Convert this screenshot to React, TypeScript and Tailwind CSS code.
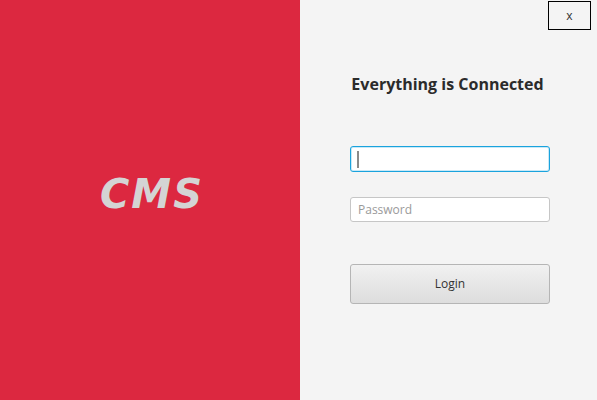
export default function App() {
  return (
    <div className="flex h-[400px] w-[597px] overflow-hidden" style={{ fontFamily: '"Open Sans", "Noto Sans", sans-serif' }}>
      {/* Brand panel */}
      <div className="flex h-full w-[300px] items-center justify-center bg-[#dc2840]">
        <span
          className="mb-[12px] pl-[4px] text-[40px] font-bold italic tracking-[2px] text-[#d4d4d4]"
          style={{ fontFamily: '"DejaVu Sans", sans-serif' }}
        >
          CMS
        </span>
      </div>

      {/* Form panel */}
      <div className="flex h-full flex-1 flex-col bg-[#f4f4f4]">
        <div className="flex justify-end pr-[6px] pt-[1px]">
          <button className="h-[29px] w-[43px] border border-black text-[12px] text-[#333]">x</button>
        </div>
        <div className="flex flex-col items-center">
          <h1 className="mt-[42px] mr-[2px] text-[16px] font-bold text-[#2b2b2b]">Everything is Connected</h1>
          <div className="ml-[3px] mt-[50px] flex w-[200px] flex-col">
            <div className="flex h-[26px] items-center rounded-[3px] border border-[#1aa3dd] bg-white px-[6px] shadow-[inset_0_0_0_1px_#c9e9f7]">
              <span className="h-[17px] w-[2px] bg-[#8a8a8a]" />
            </div>
            <input
              placeholder="Password"
              className="mt-[25px] h-[25px] rounded-[3px] border border-[#c6c6c6] bg-white px-[7px] text-[12px] placeholder:text-[#9a9a9a] outline-none"
            />
            <button className="mt-[42px] h-[40px] rounded-[3px] border border-[#b5b5b5] bg-gradient-to-b from-[#f1f1f1] to-[#dddddd] text-[12px] text-[#333]">
              Login
            </button>
          </div>
        </div>
      </div>
    </div>
  )
}
